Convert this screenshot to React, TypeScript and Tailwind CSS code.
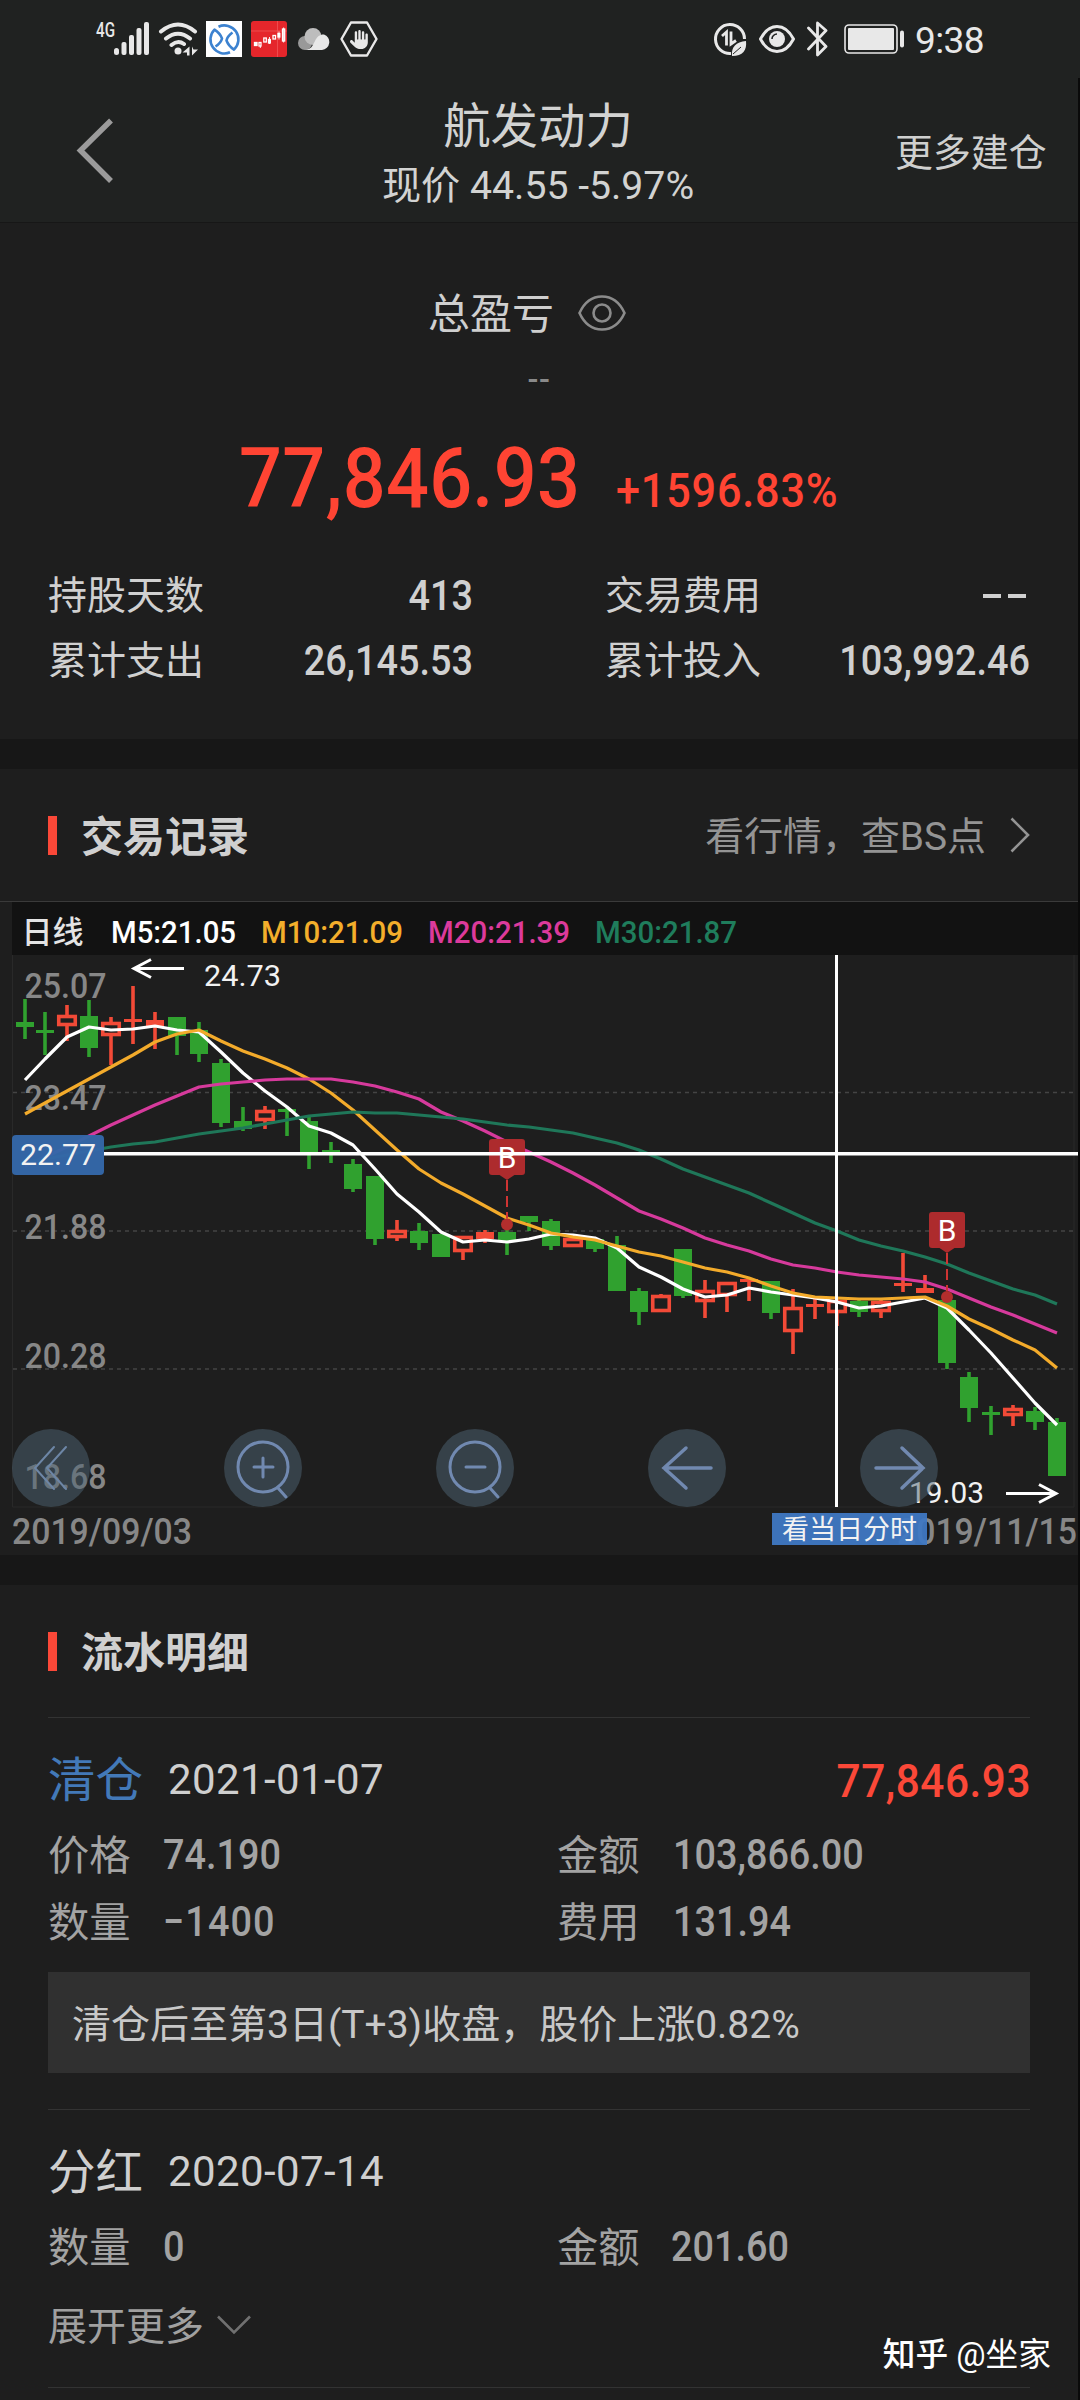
import type { ReactNode } from 'react';
import { FaHand } from 'react-icons/fa6';

type Candle = [kind: 'g' | 'r' | 'h', high: number, top: number, bottom: number, low: number];

// g = falling, r = rising (solid), h = rising (hollow)
const candles: Candle[] = [
  ['g', 999, 1022, 1027, 1039],
  ['g', 1012, 1030, 1032, 1055],
  ['h', 1005, 1015, 1026, 1041],
  ['g', 1000, 1016, 1048, 1057],
  ['h', 1017, 1022, 1036, 1065],
  ['r', 986, 1019, 1022, 1044],
  ['r', 1012, 1020, 1027, 1049],
  ['g', 1017, 1017, 1036, 1055],
  ['g', 1022, 1030, 1054, 1062],
  ['g', 1059, 1063, 1123, 1127],
  ['g', 1107, 1121, 1129, 1131],
  ['h', 1106, 1110, 1121, 1129],
  ['g', 1108, 1109, 1112, 1136],
  ['g', 1115, 1121, 1152, 1169],
  ['g', 1142, 1150, 1152, 1163],
  ['g', 1159, 1164, 1189, 1192],
  ['g', 1176, 1176, 1239, 1245],
  ['h', 1220, 1230, 1238, 1241],
  ['g', 1223, 1231, 1243, 1250],
  ['g', 1234, 1234, 1257, 1257],
  ['h', 1236, 1236, 1252, 1260],
  ['r', 1230, 1232, 1239, 1243],
  ['g', 1224, 1232, 1241, 1255],
  ['g', 1216, 1216, 1222, 1231],
  ['g', 1219, 1221, 1246, 1250],
  ['h', 1238, 1238, 1247, 1247],
  ['g', 1238, 1239, 1249, 1252],
  ['g', 1236, 1245, 1291, 1291],
  ['g', 1288, 1291, 1312, 1325],
  ['h', 1294, 1295, 1312, 1312],
  ['g', 1249, 1249, 1296, 1298],
  ['h', 1280, 1290, 1302, 1318],
  ['h', 1282, 1282, 1296, 1312],
  ['r', 1278, 1279, 1282, 1301],
  ['g', 1281, 1281, 1313, 1319],
  ['h', 1289, 1307, 1332, 1354],
  ['r', 1297, 1304, 1307, 1319],
  ['h', 1299, 1300, 1313, 1326],
  ['g', 1299, 1301, 1312, 1317],
  ['h', 1298, 1301, 1312, 1318],
  ['r', 1253, 1283, 1285, 1292],
  ['r', 1275, 1288, 1293, 1293],
  ['g', 1297, 1300, 1363, 1369],
  ['g', 1372, 1377, 1408, 1422],
  ['g', 1406, 1412, 1414, 1435],
  ['h', 1405, 1408, 1416, 1426],
  ['g', 1407, 1411, 1422, 1430],
  ['g', 1418, 1422, 1476, 1476],
];

const ma5 = [
  1080, 1059, 1037, 1027, 1030, 1029, 1026, 1030, 1032, 1052, 1073, 1091, 1107, 1126, 1133, 1145,
  1169, 1194, 1212, 1232, 1242, 1240, 1242, 1239, 1234, 1235, 1238, 1248, 1267, 1277, 1289, 1297,
  1295, 1288, 1292, 1295, 1298, 1302, 1308, 1306, 1302, 1298, 1308, 1330, 1353, 1378, 1403, 1425,
];
const ma10 = [
  1114, 1103, 1091, 1079, 1067, 1055, 1042, 1034, 1030, 1041, 1051, 1059, 1068, 1079, 1093, 1110,
  1130, 1150, 1169, 1183, 1194, 1206, 1218, 1225, 1233, 1237, 1240, 1246, 1252, 1256, 1262, 1268,
  1272, 1278, 1286, 1293, 1297, 1298, 1299, 1299, 1298, 1297, 1306, 1319, 1329, 1340, 1350, 1368,
];
const ma20 = [
  1166, 1157, 1147, 1136, 1125, 1115, 1105, 1096, 1087, 1084, 1082, 1080, 1079, 1079, 1079, 1082,
  1086, 1092, 1099, 1112, 1121, 1131, 1142, 1152, 1162, 1173, 1185, 1198, 1211, 1219, 1228, 1238,
  1245, 1251, 1259, 1265, 1268, 1272, 1275, 1277, 1279, 1282, 1289, 1298, 1307, 1315, 1324, 1333,
];
const ma30 = [
  1162, 1159, 1155, 1151, 1147, 1144, 1142, 1138, 1134, 1131, 1128, 1124, 1120, 1116, 1114, 1112,
  1113, 1113, 1115, 1117, 1119, 1122, 1125, 1127, 1130, 1133, 1138, 1143, 1150, 1159, 1169, 1177,
  1185, 1193, 1203, 1213, 1223, 1231, 1240, 1246, 1251, 1257, 1264, 1273, 1281, 1289, 1295, 1304,
];

const xAt = (i: number) => (i === 0 ? 25 : 23 + 22 * i);
const toPoints = (line: number[]) => line.map((y, i) => `${xAt(i)},${y}`).join(' ');

const CandleBar = ({ candle, index }: { candle: Candle; index: number }) => {
  const [kind, high, top, bottom, low] = candle;
  const x = xAt(index);
  const color = kind === 'g' ? '#30a12f' : '#f24a37';
  const height = Math.max(bottom - top, 3);
  return (
    <g>
      <rect x={x - 1.8} y={high} width={3.6} height={Math.max(top - high, 0)} fill={color} />
      <rect x={x - 1.8} y={bottom} width={3.6} height={Math.max(low - bottom, 0)} fill={color} />
      {kind === 'h' ? (
        <rect
          x={x - 8.25}
          y={top + 1.5}
          width={16.5}
          height={Math.max(height - 3, 2)}
          fill="#1e1e1e"
          stroke={color}
          strokeWidth={3.6}
        />
      ) : (
        <rect x={x - 9} y={top} width={18} height={height} fill={color} />
      )}
    </g>
  );
};

const BuyMarker = ({ x, y, dot }: { x: number; y: number; dot: number }) => (
  <g>
    <line x1={x} x2={x} y1={y + 41} y2={dot - 6} stroke="#cf3433" strokeWidth="2" strokeDasharray="11 5" />
    <circle cx={x} cy={dot} r="6" fill="#b32e2d" />
    <rect x={x - 18} y={y} width="36" height="36" rx="3" fill="#ad2b2d" />
    <path d={`M${x - 9} ${y + 35}h18l-9 6z`} fill="#ad2b2d" />
    <text x={x} y={y + 29} fill="#fff" fontSize="30" textAnchor="middle">B</text>
  </g>
);

type LabelProps = { x: number; y: number; w: number; size: number; color: string; weight?: number; children: string };

const Label = ({ x, y, w, size, color, weight = 400, children }: LabelProps) => (
  <text x={x} y={y} textLength={w} lengthAdjust="spacingAndGlyphs" fontSize={size} fontWeight={weight} fill={color}>
    {children}
  </text>
);

const RoundButton = ({ x, children }: { x: number; children: ReactNode }) => (
  <g transform={`translate(${x} 1468)`} fill="none" stroke="#7189b0" strokeWidth="3" strokeLinecap="round">
    <circle r="39" fill="#4e6474" fillOpacity="0.5" stroke="none" />
    {children}
  </g>
);

const KLineChart = () => (
  <svg viewBox="0 902 1078 653" className="block h-[653px] w-[1078px]">
    <rect x="12" y="902" width="1066" height="53" fill="#121212" />
    <text x="21.5" y="943" fontSize="31" fontWeight="500" fill="#e4e4e4">日线</text>
    <Label x={111} y={943} w={125} size={32} weight={500} color="#ffffff">M5:21.05</Label>
    <Label x={261} y={943} w={142} size={32} weight={500} color="#f3ae2b">M10:21.09</Label>
    <Label x={428} y={943} w={142} size={32} weight={500} color="#dc3a9b">M20:21.39</Label>
    <Label x={595} y={943} w={142} size={32} weight={500} color="#1f7d5c">M30:21.87</Label>

    <path d="M12.5 955V1507H1074V955" fill="none" stroke="#292929" />
    {[1092.5, 1231, 1369].map((y) => (
      <line key={y} x1="13" x2="1074" y1={y} y2={y} stroke="#444" strokeWidth="1.6" strokeDasharray="4 4" />
    ))}

    <Label x={24.5} y={998} w={82} size={35.5} weight={500} color="#878787">25.07</Label>
    <Label x={24.5} y={1110} w={82} size={35.5} weight={500} color="#878787">23.47</Label>
    <Label x={24.5} y={1239} w={82} size={35.5} weight={500} color="#878787">21.88</Label>
    <Label x={24.5} y={1368} w={82} size={35.5} weight={500} color="#878787">20.28</Label>
    <Label x={24.5} y={1489} w={82} size={35.5} weight={500} color="#878787">18.68</Label>
    <Label x={12} y={1544} w={180} size={36} weight={500} color="#878787">2019/09/03</Label>
    <Label x={897} y={1544} w={180} size={36} weight={500} color="#878787">2019/11/15</Label>

    {candles.map((candle, i) => (
      <CandleBar key={i} candle={candle} index={i} />
    ))}
    <g fill="none" strokeWidth="3.200" strokeLinejoin="round">
      <polyline points={toPoints(ma5)} stroke="#fff" />
      <polyline points={toPoints(ma10)} stroke="#f3ab2b" />
      <polyline points={toPoints(ma20)} stroke="#d63a9c" />
      <polyline points={toPoints(ma30)} stroke="#1f7759" />
    </g>

    <path d="M184 968.5H134M151 959.5L134 968.5L151 977.5" fill="none" stroke="#fff" strokeWidth="3" />
    <Label x={204} y={985.5} w={77} size={30} color="#f2f2f2">24.73</Label>
    <Label x={909} y={1503} w={75} size={30} color="#f2f2f2">19.03</Label>
    <path d="M1006 1493.5H1055M1039 1484.5L1056 1493.5L1039 1502.5" fill="none" stroke="#fff" strokeWidth="3" />

    <BuyMarker x={507} y={1139} dot={1224.5} />
    <BuyMarker x={947} y={1212} dot={1297} />

    {/* crosshair */}
    <line x1="104" x2="1078" y1="1153.8" y2="1153.8" stroke="#fff" strokeWidth="3.6" />
    <line x1="836.5" x2="836.5" y1="955" y2="1507" stroke="#fff" strokeWidth="3" />
    <rect x="12" y="1135" width="92" height="40" rx="4" fill="#3467a8" fillOpacity="0.97" />
    <Label x={20} y={1165} w={76} size={30} color="#f2f2f2">22.77</Label>
    <rect x="772" y="1513" width="155" height="32" fill="#3f78c3" fillOpacity="0.95" />
    <text x="782" y="1539" fontSize="27" fill="#f2f2f2">看当日分时</text>

    <RoundButton x={51}>
      <path d="M3 -21L-16 0L3 21M15 -21L-4 0L15 21" strokeWidth="2" stroke="#6d86a6" />
    </RoundButton>
    <RoundButton x={263}>
      <circle r="25" cy="-1" />
      <path d="M-9 -1H10M0 -10V9M15 20L23 29" />
    </RoundButton>
    <RoundButton x={475}>
      <circle r="25" cy="-1" />
      <path d="M-9 -1H10M15 20L23 29" />
    </RoundButton>
    <RoundButton x={687}>
      <path d="M24 0H-23M-1 -20L-23 0L-1 20" strokeWidth="3.5" />
    </RoundButton>
    <RoundButton x={899}>
      <path d="M-23 0H24M3 -20L24 0L3 20" strokeWidth="3.5" />
    </RoundButton>
  </svg>
);

const StatusBar = () => (
  <div className="flex h-[78px] items-center pl-[96px] text-[#e8e8e8]">
    <svg viewBox="0 0 54 36" className="h-9 w-[54px] overflow-visible" fill="currentColor">
      <text x="0" y="16" fontSize="21" fontWeight="500" textLength="19" lengthAdjust="spacingAndGlyphs">4G</text>
      <rect x="18" y="27" width="5" height="7" rx="2.5" />
      <rect x="25.5" y="21" width="5" height="13" rx="2" />
      <rect x="33" y="14" width="5" height="20" rx="2" />
      <rect x="40.5" y="7" width="5" height="27" rx="2" />
      <rect x="48" y="1" width="5" height="33" rx="2" />
    </svg>
    <svg viewBox="0 0 40 36" className="ml-2 h-9 w-10" fill="none" stroke="currentColor" strokeWidth="4" strokeLinecap="round">
      <path d="M3 10.500Q20 -3.500 37 10.500M8 17.500Q20 8 32 17.500M13.500 24Q20 18.500 26 23" />
      <circle cx="20" cy="30" r="3.500" fill="currentColor" stroke="none" />
      <path d="M31.500 25.500v9h-2.500v-3h-4.500zM34 34.500v-9l1.500 3h4.500z" fill="currentColor" stroke="none" />
    </svg>
    <svg viewBox="0 0 36 36" className="ml-2 h-9 w-9" fill="none" stroke="#3c82d0" strokeWidth="2.600" strokeLinejoin="round">
      <rect width="36" height="36" fill="#fff" stroke="none" />
      <path d="M12.500 5.700A14 14 0 0 1 28 28.600Q22.500 25 20.500 19.500Q21.500 15 26.500 11.500" />
      <path d="M24 31.300A14 14 0 0 1 8.500 8.600Q14 12 16 17.500Q15 22 9.500 25.500" />
    </svg>
    <svg viewBox="0 0 36 36" className="ml-[9px] h-9 w-9" fill="none" stroke="#fff" strokeWidth="1.300">
      <rect width="36" height="36" rx="3" fill="#e5262b" stroke="none" />
      <path d="M0 10h36M26.500 0v36" stroke="#ef5557" strokeWidth="0.800" />
      <rect x="3.500" y="21.500" width="2.500" height="3" fill="#fff" />
      <rect x="8" y="21.500" width="2" height="3.500" />
      <rect x="12.800" y="17" width="2.500" height="4" />
      <rect x="17.500" y="18.500" width="1.800" height="3.500" fill="#fff" />
      <rect x="22" y="14.500" width="2.500" height="3.500" />
      <rect x="27" y="12.500" width="1.800" height="3.500" fill="#fff" />
      <rect x="31.500" y="8" width="2.200" height="12" />
      <path d="M9.300 25v2M18.500 16v7M28 10.500v8M32.600 6.500v15" strokeWidth="0.900" />
    </svg>
    <svg viewBox="0 0 32 22" className="ml-[11px] h-[22px] w-8">
      <circle cx="7" cy="15" r="7" fill="#999" />
      <circle cx="15" cy="8.500" r="8.500" fill="#bdbdbd" />
      <path d="M7 22c6-1 7-3 10-9c2-5 6-7 9-6.500a8 8 0 0 1-2 15.500z" fill="#e8e8e8" />
    </svg>
    <div className="relative ml-[10px] flex h-9 w-[38px] items-center justify-center">
      <svg viewBox="0 0 38 36" className="absolute inset-0 h-9 w-[38px]" fill="none" stroke="currentColor" strokeWidth="2.400">
        <path d="M11 1.500H27L36.500 18L27 34.500H11L1.500 18Z" strokeLinejoin="round" />
      </svg>
      <FaHand className="h-[21px] w-[19px]" />
    </div>

    <svg viewBox="0 0 34 34" className="ml-[335px] h-[34px] w-[34px]" fill="none" stroke="currentColor" strokeWidth="3">
      <path d="M31.500 17A14.500 14.500 0 1 0 18 31.500" />
      <path d="M9 14l4.500-4V23.500M18 9.500V22L23 18.500" strokeWidth="2.800" />
      <path d="M19 34c-1-9 4-14 14-15c1 9-3 15-14 15z" fill="currentColor" stroke="none" />
      <path d="M20 32l8-7" stroke="#202221" strokeWidth="1" />
    </svg>
    <svg viewBox="0 0 36 28" className="ml-3 h-7 w-9" fill="none" stroke="currentColor" strokeWidth="3">
      <path d="M1.500 14Q8 1.500 18 1.500T34.500 14Q28 26.500 18 26.500T1.500 14Z" />
      <circle cx="18" cy="14" r="8" fill="currentColor" stroke="none" />
      <path d="M13 14a5 5 0 0 1 5-5" stroke="#202221" strokeWidth="1.600" />
    </svg>
    <svg viewBox="0 0 21 36" className="ml-3 h-9 w-[21px]" fill="none" stroke="currentColor" strokeWidth="2.800" strokeLinejoin="round" strokeLinecap="round">
      <path d="M1.500 7L19 25.500L10.500 34V2L19 9.500L1.500 28" />
    </svg>
    <svg viewBox="0 0 62 30" className="ml-4 h-[30px] w-[62px]" fill="none" stroke="currentColor">
      <rect x="1" y="1" width="52" height="28" rx="4" strokeWidth="1.600" />
      <rect x="4" y="4" width="46" height="22" rx="1" fill="currentColor" stroke="none" />
      <rect x="56" y="6.500" width="4" height="17" rx="2" fill="currentColor" stroke="none" />
    </svg>
    <span className="mt-[3px] ml-[9px] text-[37px] leading-none tracking-[-0.6px]">9:38</span>
  </div>
);

const Header = () => (
  <div className="flex h-[145px] items-start border-b border-[#171717] bg-[#202221]">
    <svg viewBox="0 0 38 66" className="mt-[40px] ml-[76px] h-[66px] w-[38px]" fill="none" stroke="#9b9b9b" strokeWidth="5.500">
      <path d="M35 2.500L4.500 32.500L35 63" />
    </svg>
    <div className="ml-[224px] flex w-[400px] flex-col items-center pt-[25px] text-[#d2d3d2]">
      <h1 className="text-[47.400px] leading-[48px]">航发动力</h1>
      <p className="mt-[15px] text-[39.200px] leading-[40px] whitespace-nowrap">现价 44.55 -5.97%</p>
    </div>
    <button className="mt-[55px] ml-[157px] text-[37.900px] leading-[40px] whitespace-nowrap text-[#cfd0cf]">更多建仓</button>
  </div>
);

const stats = [
  ['持股天数', '413', '交易费用', '--'],
  ['累计支出', '26,145.53', '累计投入', '103,992.46'],
];

const Summary = () => (
  <section className="h-[516px] pt-[68px]">
    <div className="flex items-center pl-[428px]">
      <span className="text-[42px] leading-[48px] text-[#cfcfcf]">总盈亏</span>
      <svg viewBox="0 0 48 36" className="mt-[-4px] ml-[24px] h-9 w-12" fill="none" stroke="#8b8b8b" strokeWidth="2.600">
        <path d="M1.500 18Q9 1.500 24 1.500T46.500 18Q39 34.500 24 34.500T1.500 18Z" />
        <circle cx="24" cy="18" r="8.500" />
      </svg>
    </div>
    <div className="mt-[22px] text-center text-[32px] leading-[36px] font-medium tracking-[0.600px] text-[#8a8a8a]">--</div>
    <div className="mt-[40px] flex h-[84px] items-baseline pl-[239px] font-medium whitespace-nowrap text-[#ff4433]">
      <span className="w-[377px] origin-left scale-x-90 text-[84px] leading-[84px] tracking-[0.300px]">77,846.93</span>
      <span className="origin-left scale-x-90 text-[48px] leading-none tracking-[0.900px]">+1596.83%</span>
    </div>
    {stats.map(([leftName, leftValue, rightName, rightValue], i) => (
      <div
        key={leftName}
        className={`flex h-[65px] items-center pl-[48px] leading-none text-[#d0d0d0] ${i === 0 ? 'mt-[42px]' : ''}`}
      >
        <span className="mt-[2px] w-[214px] text-[39px]">{leftName}</span>
        <span className="w-[211px] origin-right scale-x-90 text-right text-[42px] font-medium">{leftValue}</span>
        <span className="mt-[2px] ml-[132px] w-[200px] text-[39px]">{rightName}</span>
        {rightValue === '--' ? (
          <span className="ml-[178px] flex gap-[7px]">
            <i className="h-1 w-[18px] bg-[#d0d0d0]" />
            <i className="h-1 w-[18px] bg-[#d0d0d0]" />
          </span>
        ) : (
          <span className="w-[225px] origin-right scale-x-90 text-right text-[42px] font-medium">{rightValue}</span>
        )}
      </div>
    ))}
  </section>
);

const SectionTitle = ({ children }: { children: ReactNode }) => (
  <div className="flex items-center">
    <div className="h-[39px] w-[9px] bg-[#fb4838]" />
    <h2 className="mt-[5px] ml-[24px] text-[42px] leading-[44px] font-bold text-[#d0d0d0]">{children}</h2>
  </div>
);

const Divider = () => <div className="h-[30px] bg-[#171717]" />;

const Field = ({ name, value, gap }: { name: string; value: string; gap: string }) => (
  <div className="flex items-center leading-none text-[#a3a3a3]">
    <span className="mt-[2px] text-[41.300px]">{name}</span>
    <span className={`origin-left scale-x-90 text-[42px] font-medium ${gap}`}>{value}</span>
  </div>
);

const App = () => {
  return (
    <div
      lang="zh-CN"
      className="h-[2400px] w-[1080px] overflow-hidden bg-[#202221] font-[Roboto,'Noto_Sans_CJK_SC',sans-serif]"
    >
      <StatusBar />
      <div className="relative h-[2322px] border-r-2 border-[#0a0a0a] bg-[#1e1e1e]">
        <Header />
        <Summary />
        <Divider />

        <section>
          <div className="flex h-[133px] items-center justify-between border-b border-[#3a3a3a] pr-[48px] pl-[48px]">
            <SectionTitle>交易记录</SectionTitle>
            <div className="flex items-center text-[38.900px] leading-none text-[#949494]">
              <span className="mt-[4px]">看行情，查BS点</span>
              <svg viewBox="0 0 20 36" className="ml-6 h-9 w-5" fill="none" stroke="#949494" strokeWidth="2.600">
                <path d="M1.500 1.500L18 18L1.500 34.500" />
              </svg>
            </div>
          </div>
          <KLineChart />
        </section>
        <Divider />

        <section className="px-[48px]">
          <div className="flex h-[133px] items-center border-b border-[#333]">
            <SectionTitle>流水明细</SectionTitle>
          </div>

          <div className="h-[392px] border-b border-[#333] pt-[30px]">
            <div className="flex h-[64px] items-center leading-none">
              <span className="mt-[3px] text-[47.500px] text-[#4379b8]">清仓</span>
              <span className="ml-[25px] text-[42px] tracking-[0.400px] text-[#cfcfcf]">2021-01-07</span>
              <span className="mr-[-1px] ml-auto origin-right scale-x-90 text-[47px] font-medium tracking-[0.600px] text-[#fb4838]">
                77,846.93
              </span>
            </div>
            <div className="mt-[10px] grid grid-cols-[509px_1fr] grid-rows-[67px_67px] items-center">
              <Field name="价格" value="74.190" gap="ml-[32px]" />
              <Field name="金额" value="103,866.00" gap="ml-[33px]" />
              <Field name="数量" value="−1400" gap="ml-[32px] tracking-[1.200px]" />
              <Field name="费用" value="131.94" gap="ml-[33px]" />
            </div>
            <div className="mt-[16px] flex h-[101px] items-center bg-[#303030] pt-[6px] pl-[24px] text-[39px] leading-none text-[#c8c8c8]">
              清仓后至第3日(T+3)收盘，股价上涨0.82%
            </div>
          </div>

          <div className="h-[278px] border-b border-[#333] pt-[30px]">
            <div className="flex h-[64px] items-center leading-none text-[#cfcfcf]">
              <span className="mt-[3px] text-[47.500px]">分红</span>
              <span className="ml-[25px] text-[42px] tracking-[0.400px]">2020-07-14</span>
            </div>
            <div className="mt-[10px] grid h-[67px] grid-cols-[509px_1fr] items-center">
              <Field name="数量" value="0" gap="ml-[32px]" />
              <Field name="金额" value="201.60" gap="ml-[31px]" />
            </div>
            <div className="mt-[26px] flex items-center text-[39px] leading-[40px] text-[#a0a0a0]">
              展开更多
              <svg viewBox="0 0 36 20" className="mt-[-4px] ml-[12px] h-5 w-9" fill="none" stroke="#707070" strokeWidth="2.600">
                <path d="M2 1.500L18 17.500L34 1.500" />
              </svg>
            </div>
          </div>
        </section>

        <div className="absolute right-[27px] bottom-[27px] text-[32.700px] leading-[36px] whitespace-nowrap text-white">
          <span className="font-medium">知乎</span> @坐家
        </div>
      </div>
    </div>
  );
};

export default App;
